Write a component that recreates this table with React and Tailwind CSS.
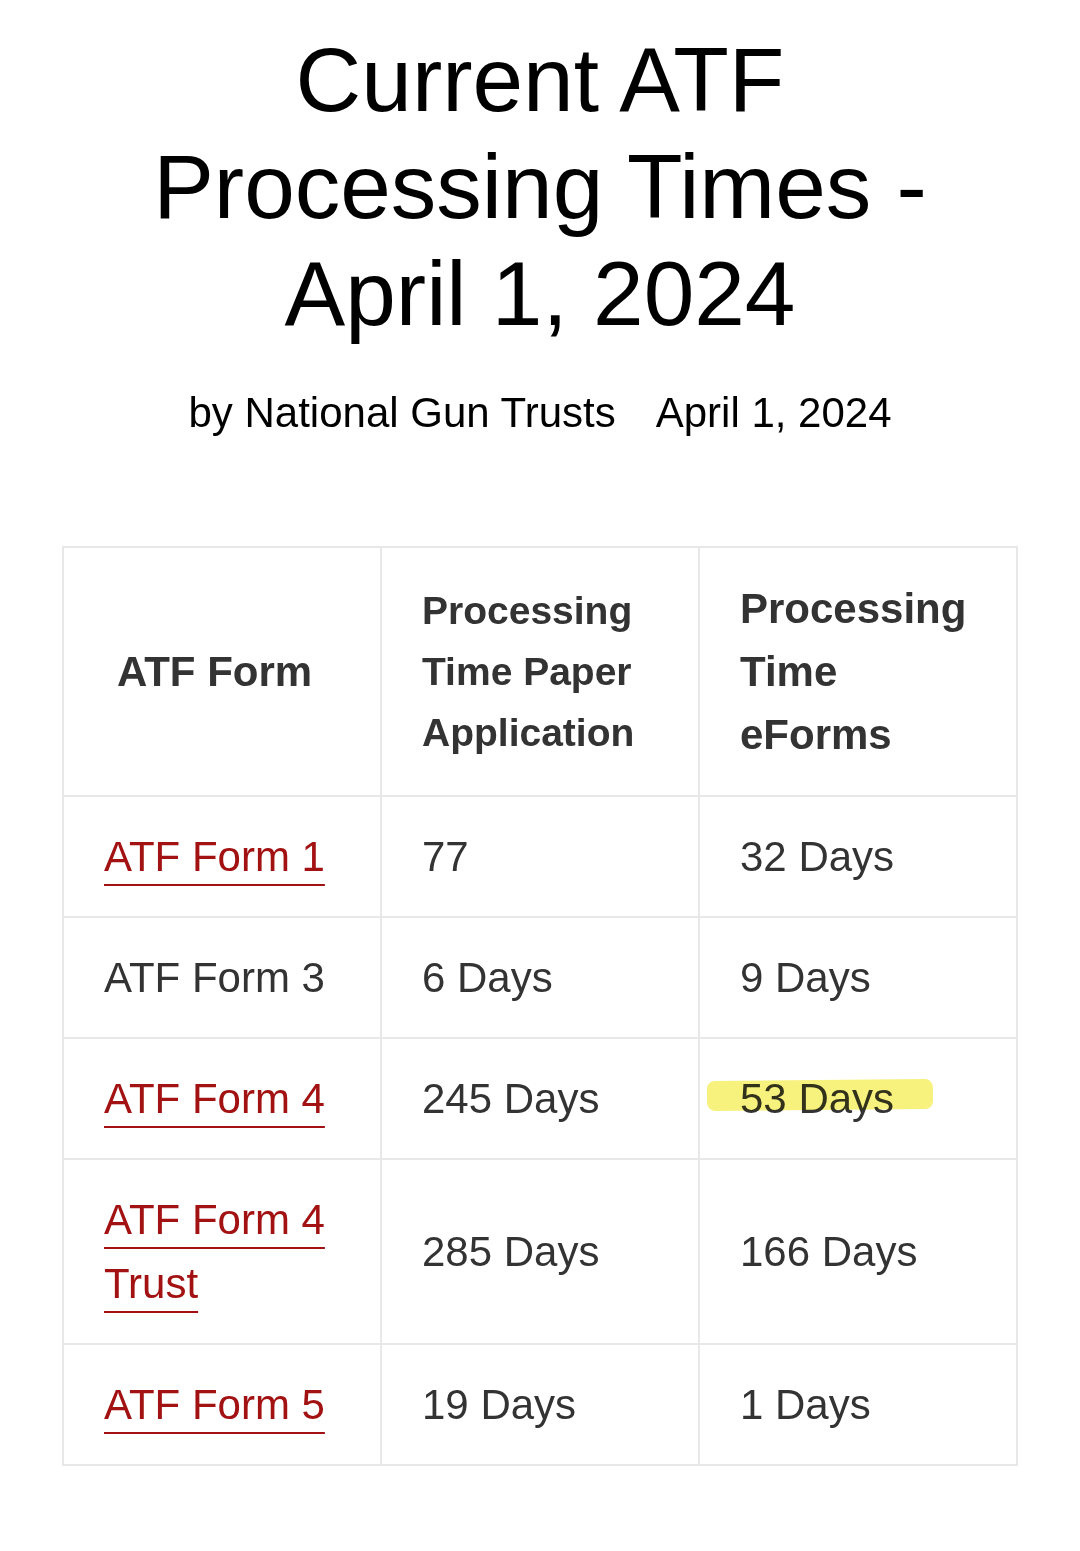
import React from 'react';

const rows = [
  { form: 'ATF Form 1', link: true, paper: '77', eforms: '32 Days' },
  { form: 'ATF Form 3', link: false, paper: '6 Days', eforms: '9 Days' },
  { form: 'ATF Form 4', link: true, paper: '245 Days', eforms: '53 Days', highlight: true },
  { form: 'ATF Form 4 Trust', link: true, paper: '285 Days', eforms: '166 Days' },
  { form: 'ATF Form 5', link: true, paper: '19 Days', eforms: '1 Days' },
];

function Cell({ children, className = '' }) {
  return (
    <td className={`border-2 border-[#e8e8e8] px-[40px] py-[27.5px] align-middle ${className}`}>
      {children}
    </td>
  );
}

export default function App() {
  return (
    <div className="min-h-screen w-full bg-white font-['Liberation_Sans',Arial,sans-serif]">
      <div className="flex flex-col items-center pt-[26px]">
        <h1 className="max-w-[900px] text-center text-[91px] leading-[107px] font-normal text-black">
          Current ATF Processing Times - April 1, 2024
        </h1>
        <div className="mt-[42px] flex gap-[40px] text-[42px] leading-[48px] text-black">
          <span>by National Gun Trusts</span>
          <span>April 1, 2024</span>
        </div>
      </div>

      <div className="mt-[109px] flex justify-center">
        <table className="w-[956px] table-fixed border-collapse text-[42px] text-[#333]">
          <thead>
            <tr className="font-bold">
              <th className="border-2 border-[#e8e8e8] pl-[53px] pr-[20px] py-[29px] text-left align-middle leading-[62px]">
                ATF Form
              </th>
              <th className="border-2 border-[#e8e8e8] px-[40px] py-[29px] text-left align-middle text-[39px] leading-[61px]">
                Processing Time Paper Application
              </th>
              <th className="border-2 border-[#e8e8e8] px-[40px] py-[29px] text-left align-middle leading-[63px]">
                Processing Time eForms
              </th>
            </tr>
          </thead>
          <tbody className="leading-[64px]">
            {rows.map((r) => (
              <tr key={r.form}>
                <Cell>
                  {r.link ? (
                    <a
                      href="#"
                      className="text-[#a31212] underline decoration-2 underline-offset-[13px]"
                    >
                      {r.form}
                    </a>
                  ) : (
                    r.form
                  )}
                </Cell>
                <Cell>{r.paper}</Cell>
                <Cell>
                  {r.highlight ? (
                    <span className="relative inline-block">
                      {r.eforms}
                      <span className="absolute left-[-33px] top-[13px] h-[30px] w-[226px] -rotate-[0.5deg] rounded-[8px] bg-[#f7f070] opacity-90 mix-blend-multiply" />
                    </span>
                  ) : (
                    r.eforms
                  )}
                </Cell>
              </tr>
            ))}
          </tbody>
        </table>
      </div>
    </div>
  );
}
